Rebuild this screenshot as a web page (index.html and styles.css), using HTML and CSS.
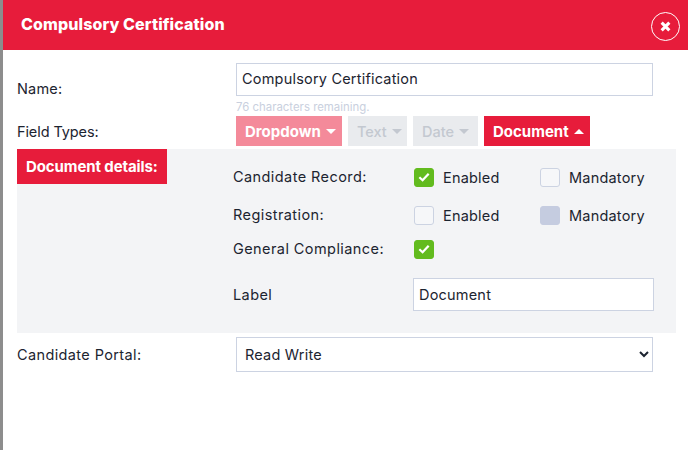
FILE: index.html
```html
<!DOCTYPE html>
<html lang="en">
<head>
<meta charset="utf-8">
<title>Compulsory Certification</title>
<link rel="stylesheet" href="styles.css">
</head>
<body>
<div class="modal">
  <header class="modal-head">
    <h1 class="modal-title">Compulsory Certification</h1>
    <button class="close" type="button" aria-label="Close">
      <svg class="close-icon" viewBox="0 0 10 10" aria-hidden="true"><path d="M1.5 1.5l7 7M8.5 1.5l-7 7"/></svg>
    </button>
  </header>
  <main class="modal-body">
    <div class="row row-name">
      <span class="row-label">Name:</span>
      <div class="row-field">
        <input class="text-input name-input" type="text" value="Compulsory Certification">
        <div class="hint">76 characters remaining.</div>
      </div>
    </div>
    <div class="row row-types">
      <span class="row-label">Field Types:</span>
      <div class="type-buttons">
        <span class="type-btn dim">Dropdown<i class="caret"></i></span>
        <span class="type-btn off">Text<i class="caret"></i></span>
        <span class="type-btn off">Date<i class="caret"></i></span>
        <span class="type-btn on">Document<i class="caret up"></i></span>
      </div>
    </div>
    <section class="details">
      <div class="details-tag">Document details:</div>
      <div class="details-grid">
        <span class="d-label d-r1">Candidate Record:</span>
        <span class="check-item d-r1"><i class="box checked"><svg viewBox="0 0 12 12" aria-hidden="true"><path d="M2 6.2l2.8 2.6 5.2-5.6"/></svg></i>Enabled</span>
        <span class="check-item d-r1"><i class="box"></i>Mandatory</span>

        <span class="d-label d-r2">Registration:</span>
        <span class="check-item d-r2"><i class="box"></i>Enabled</span>
        <span class="check-item d-r2"><i class="box filled"></i>Mandatory</span>

        <span class="d-label d-r3">General Compliance:</span>
        <span class="check-item d-r3"><i class="box checked"><svg viewBox="0 0 12 12" aria-hidden="true"><path d="M2 6.2l2.8 2.6 5.2-5.6"/></svg></i></span>
        <span class="d-r3"></span>

        <span class="d-label d-r4">Label</span>
        <input class="text-input label-input d-r4" type="text" value="Document">
      </div>
    </section>
    <div class="row row-portal">
      <span class="row-label">Candidate Portal:</span>
      <select class="portal-select"><option>Read Write</option></select>
    </div>
  </main>
</div>
</body>
</html>
```
FILE: styles.css
```css
* { box-sizing: border-box; }
html, body { margin: 0; padding: 0; height: 100%; }
body {
  overflow: hidden;
  background: #fff;
  font-family: "Inter", "Noto Sans", sans-serif;
  font-size: 14.5px;
  letter-spacing: 0.2px;
  color: #1c2430;
}
.modal {
  height: 450px;
  margin-left: 3px;
  background: #fff;
  box-shadow: -3px 0 0 #8d8d8d;
}
.modal-head {
  height: 50px;
  background: #e71c3b;
  display: flex;
  align-items: center;
  justify-content: space-between;
  padding: 0 8px 0 18px;
}
.modal-title {
  margin: 0 0 3px;
  font-size: 16px;
  font-weight: 800;
  letter-spacing: 0.1px;
  color: #fff;
}
.close {
  width: 29px;
  height: 29px;
  margin-top: 3px;
  padding: 0;
  display: flex;
  align-items: center;
  justify-content: center;
  background: transparent;
  border: 1px solid #fff;
  border-radius: 50%;
}
.close-icon { width: 11px; height: 11px; }
.close-icon path { fill: none; stroke: #fff; stroke-width: 2.8; }
.modal-body { padding: 13px 12px 0 14px; }
.row { display: flex; }
.row-label { width: 219px; flex: none; }
.row-name { height: 53px; }
.row-name .row-label { padding-top: 17px; }
.text-input {
  display: block;
  font: inherit;
  letter-spacing: inherit;
  color: #1c2430;
  background: #fff;
  border: 1px solid #ccd3e2;
  outline: 0;
}
.name-input { width: 417px; height: 33px; padding: 0 5px 3px; }
.hint { margin-top: 5px; font-size: 11.4px; line-height: 13px; letter-spacing: 0; color: #c9d0de; }
.row-types { height: 30px; align-items: flex-start; }
.row-types .row-label { padding-top: 7px; letter-spacing: -0.1px; }
.type-buttons { display: flex; gap: 6px; }
.type-btn {
  height: 30px;
  padding: 0 9px;
  display: flex;
  align-items: center;
  gap: 5px;
  font-size: 15px;
  letter-spacing: 0;
  font-weight: 700;
  color: #fff;
}
.type-btn.dim { width: 106px; background: #f48a9a; }
.type-btn.off { background: #e9ebee; color: #c3c8d0; font-size: 14.5px; font-weight: 500; }
.type-btn.off:nth-child(2) { width: 59px; }
.type-btn.off:nth-child(3) { width: 65px; }
.type-btn.on { width: 106px; background: #e71c3b; }
.caret {
  width: 0;
  height: 0;
  border-left: 5px solid transparent;
  border-right: 5px solid transparent;
  border-top: 5px solid currentColor;
}
.caret.up { border-top: 0; border-bottom: 5px solid currentColor; }
.details {
  position: relative;
  height: 184px;
  margin-top: 3px;
  width: 659px;
  background: #f3f4f6;
}
.details-tag {
  position: absolute;
  left: 0;
  top: 0;
  width: 150px;
  height: 35px;
  padding: 8px 0 0 9px;
  background: #e71c3b;
  color: #fff;
  font-size: 15px;
  letter-spacing: -0.1px;
  font-weight: 700;
}
.details-grid {
  display: grid;
  grid-template-columns: 181px 126px auto;
  grid-template-rows: 38px 38px 30px 61px;
  padding: 9px 0 0 216px;
  align-items: center;
}
.d-label { letter-spacing: 0.42px; padding-bottom: 1px; }
.check-item { display: flex; align-items: center; gap: 9px; }
.box {
  width: 20px;
  height: 19px;
  flex: none;
  display: flex;
  align-items: center;
  justify-content: center;
  background: #f6f7f9;
  border: 1px solid #ccd3e2;
  border-radius: 3px;
}
.box svg { width: 14px; height: 14px; }
.box svg path { fill: none; stroke: #fff; stroke-width: 1.9; }
.box.checked { background: #62bb1e; border-color: #62bb1e; }
.box.filled { background: #c5cce0; border-color: #c5cce0; }
.label-input { grid-column: 2 / 4; width: 241px; height: 33px; margin-left: -1px; padding: 0 5px 1px; }
.row-portal { margin-top: 4px; height: 35px; align-items: center; }
.row-portal .row-label { letter-spacing: 0.38px; }
.portal-select {
  width: 417px;
  height: 35px;
  padding: 0 4px;
  font: inherit;
  letter-spacing: inherit;
  color: #1c2430;
  background: #fff;
  border: 1px solid #ccd3e2;
  border-radius: 0;
}
```
